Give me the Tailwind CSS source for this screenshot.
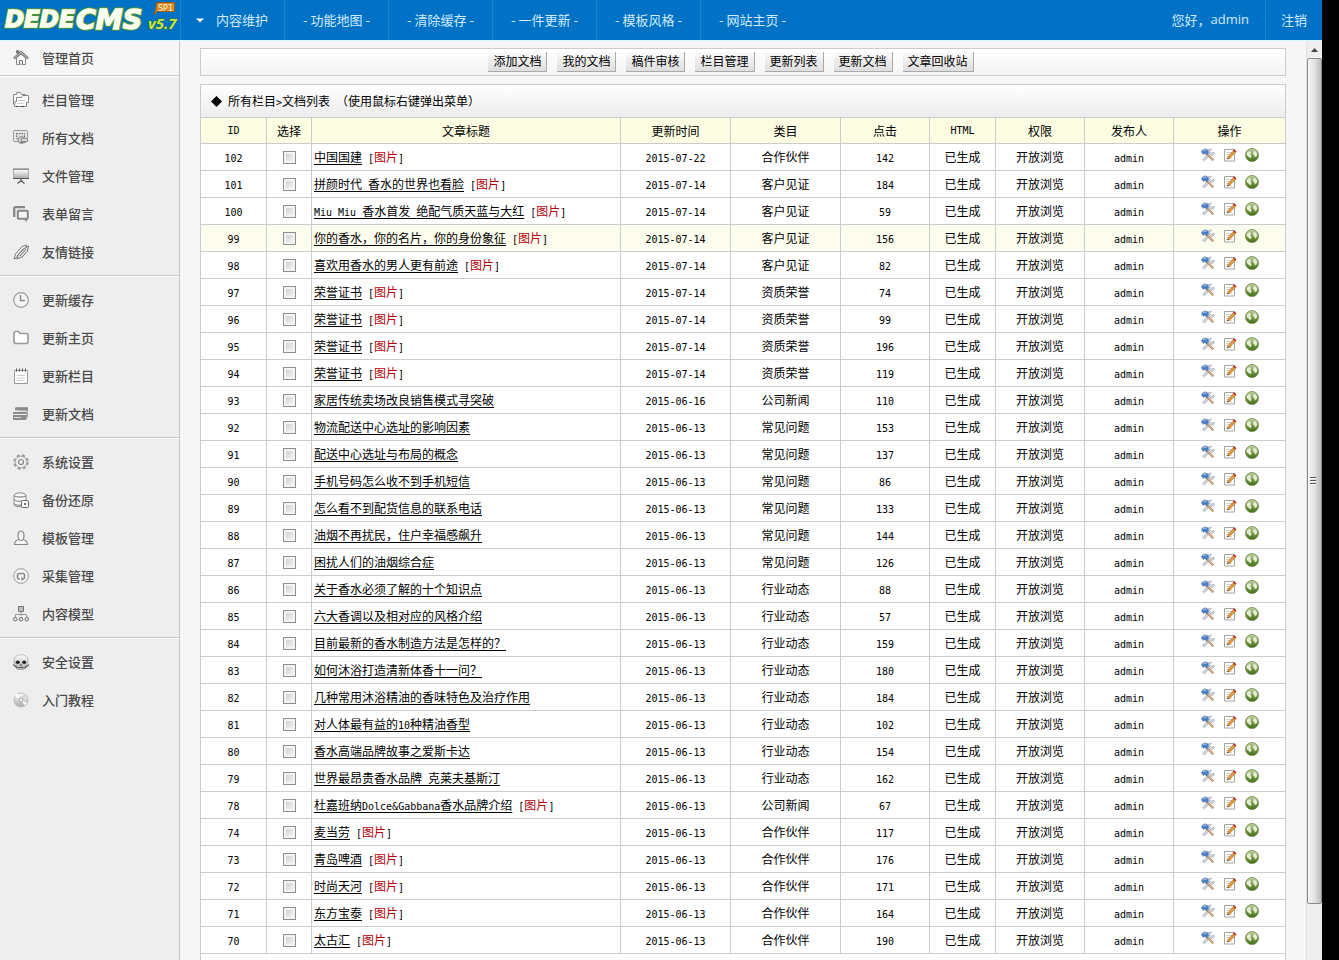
<!DOCTYPE html>
<html lang="zh-CN">
<head>
<meta charset="utf-8">
<title>DedeCMS 内容维护</title>
<script src="https://cdn.jsdelivr.net/npm/@tailwindcss/browser@4"></script>
</head>
<body class="flex h-screen overflow-hidden bg-black font-['Noto_Sans_CJK_SC',sans-serif] text-xs text-black">
<svg class="absolute size-0" aria-hidden="true">
  <defs>
    <linearGradient id="gGlobe" x1="0" y1="0" x2="0" y2="1"><stop offset="0" stop-color="#c3d0a8"/><stop offset=".5" stop-color="#7d9f4c"/><stop offset="1" stop-color="#3f6b16"/></linearGradient>
    <linearGradient id="gGrey" x1="0" y1="0" x2="0" y2="1"><stop offset="0" stop-color="#fff"/><stop offset="1" stop-color="#aaa"/></linearGradient>
    <symbol id="tools" viewBox="0 0 14 14">
      <path d="M10.500 1.200 8.600 3.400l1.600 1.800 2.800-1 .4 1.600-2.300 1.600-2.200-.5-5.600 6-1.700-1.600 5.800-5.600-.2-2.500L8.600 1z" fill="#d3d8e0" stroke="#969eaa" stroke-width=".6"/>
      <path d="m6 6 6.300 6.300" stroke="#b0855a" stroke-width="2.200"/><path d="m6.300 6 6.200 6.100" stroke="#ecd9bd" stroke-width=".8"/>
      <path d="M1 2.500 4 .8l3.600 1.400-1 .8.9 1.500L5.400 7 3.800 5.300 2.600 6.500.6 4.300z" fill="#4a7ec4" stroke="#3a65a3" stroke-width=".5"/><path d="m2 3 2-1.200 1.600.6" fill="none" stroke="#b9d2f2"/>
    </symbol>
    <symbol id="edit" viewBox="0 0 14 14">
      <path d="M1.500 1.500h10v11.500h-10z" fill="#fff" stroke="#a4a49c"/><path d="M3 4.500h6M3 6.500h4M3 8.500h3M3 10.500h6" stroke="#d4d4cc"/>
      <path d="m11 2 2 1.700-6 6.300-2.500 1 .7-2.700z" fill="#e59a3c" stroke="#a8682b" stroke-width=".6"/><path d="m11 1.200 2.400 2-1.200 1.300-2.300-2z" fill="#b8322b"/><path d="m4.300 11.200.4-1.400 1 .8z" fill="#333"/>
    </symbol>
    <symbol id="globe" viewBox="0 0 14 14">
      <circle cx="7" cy="7" r="6.600" fill="url(#gGlobe)" stroke="#7b9155" stroke-width=".8"/>
      <path d="M2 4.500 4.500 3 6 4.500l-.6 1.700L6.500 8 5.400 10.500 4 9 1.800 7z" fill="#e6eed8"/><path d="m8.500 3 2.500.6 1.200 2.600-.8 2.300-1.400.7L9.200 7l-1.200-.8z" fill="#e6eed8"/>
    </symbol>
  </defs>
</svg>

<div class="flex min-w-0 flex-1 flex-col bg-[#f6f6f6]">
  <header class="flex h-[41px] shrink-0 items-stretch border-b border-[#d3fbfd] bg-[#0072c6] text-[13px] text-[#d3eaff]">
    <a href="#" aria-label="DEDECMS" class="w-45 shrink-0">
      <svg width="180" height="40" viewBox="0 0 180 40">
        <g font-family="DejaVu Sans" font-weight="700" font-style="italic" stroke-linejoin="miter">
          <g fill="#4a8f3c" stroke="#4a8f3c" stroke-width="3.500"><text x="5" y="27" font-size="23">DEDE</text><text x="76" y="29" font-size="27">CMS</text></g>
          <g fill="#fbfff0" stroke="#fbfff0" stroke-width="1.400"><text x="5" y="27" font-size="23">DEDE</text><text x="76" y="29" font-size="27">CMS</text></g>
        </g>
        <path d="M156.500 2.500h18v9h-17l-4 3 2-4z" fill="#d98a28" stroke="#8d5a17"/>
        <text x="158" y="10.500" font-family="DejaVu Sans" font-size="8" fill="#fff6d8">SP1</text>
        <text x="148" y="29" font-family="Open Sans" font-style="italic" font-weight="700" font-size="15" fill="#c3e83c" stroke="#2b6b3d" stroke-width="1" paint-order="stroke">v5.7</text>
      </svg>
    </a>
    <nav class="flex flex-1">
      <a href="#" class="flex w-26 items-center gap-3 border-l border-[#1a84d2] pl-[15px]"><svg width="8" height="5" viewBox="0 0 8 5"><path d="M0 .5h8L4 4.500z" fill="#fff"/></svg>内容维护</a>
      <a href="#" class="flex w-26 items-center justify-center border-l border-[#1a84d2]">- 功能地图 -</a>
      <a href="#" class="flex w-26 items-center justify-center border-l border-[#1a84d2]">- 清除缓存 -</a>
      <a href="#" class="flex w-26 items-center justify-center border-l border-[#1a84d2]">- 一件更新 -</a>
      <a href="#" class="flex w-26 items-center justify-center border-l border-[#1a84d2]">- 模板风格 -</a>
      <a href="#" class="flex w-26 items-center justify-center border-l border-[#1a84d2]">- 网站主页 -</a>
    </nav>
    <span class="flex items-center px-4">您好，<span class="font-['Open_Sans',sans-serif]">admin</span></span>
    <a href="#" class="flex items-center border-l border-[#1a84d2] px-[15px]">注销</a>
  </header>

  <div class="flex min-h-0 flex-1">
    <aside id="side" class="w-45 shrink-0 border-r border-[#c6c6c6] bg-[#eee] text-[13px] font-medium text-[#4a4a4a]"></aside>

    <main class="flex min-w-0 flex-1 flex-col gap-2 overflow-hidden px-5 pt-[7px]">
      <div class="flex h-7 shrink-0 items-center justify-center gap-2.5 border border-[#ccc] bg-linear-to-b from-white to-[#f4f4f4] pr-6" id="bar"></div>
      <section class="shrink-0">
        <h1 class="flex h-[33px] items-center gap-1.5 border border-b-0 border-[#ccc] bg-linear-to-b from-white to-[#ececec] px-2.5">
          <svg width="11" height="11" viewBox="0 0 11 11"><path d="m5.500 0 5.500 5.500L5.500 11 0 5.500z"/></svg>
          <span>所有栏目<span class="font-['DejaVu_Sans_Mono',monospace] text-[10px]">&gt;</span>文档列表</span><span>（使用鼠标右键弹出菜单）</span>
        </h1>
        <table class="w-full table-fixed border-collapse text-center">
          <colgroup><col class="w-[66px]"><col class="w-[45px]"><col><col class="w-[110px]"><col class="w-[110px]"><col class="w-[89px]"><col class="w-[66px]"><col class="w-[89px]"><col class="w-[89px]"><col class="w-[112px]"></colgroup>
          <thead>
            <tr class="h-[26px] bg-[#fbfce2] [&>th]:border [&>th]:border-[#ccc] [&>th]:p-0 [&>th]:font-normal">
              <th class="font-['DejaVu_Sans_Mono',monospace] text-[10px]">ID</th><th>选择</th><th>文章标题</th><th>更新时间</th><th>类目</th><th>点击</th><th class="font-['DejaVu_Sans_Mono',monospace] text-[10px]">HTML</th><th>权限</th><th>发布人</th><th>操作</th>
            </tr>
          </thead>
          <tbody id="rows"></tbody>
        </table>
      </section>
    </main>

    <div class="flex w-4 shrink-0 flex-col border-l border-[#e2e2e2] bg-[#eee]" aria-hidden="true">
      <div class="flex h-[17px] items-center justify-center"><svg width="7" height="4" viewBox="0 0 7 4"><path d="M3.500 0 7 4H0z" fill="#444"/></svg></div>
      <div class="mb-14 flex flex-1 flex-col items-start justify-center gap-px rounded-xs border border-[#8c8c8c] bg-linear-to-r from-[#f6f6f6] via-[#e2e2e2] to-[#bcbcbc] pl-0.5">
        <i class="h-0.5 w-1.5 border-b border-white bg-[#555]"></i><i class="h-0.5 w-1.5 border-b border-white bg-[#555]"></i><i class="h-0.5 w-1.5 border-b border-white bg-[#555]"></i>
      </div>
    </div>
  </div>
</div>
<div class="w-[17px] shrink-0"></div>

<script>
const icons = {
  home: '<path d="M3.500 8v6.500h9V8L8 4z" fill="#fff" stroke="#888"/><path d="M6.500 14.500v-4h3v4" fill="#eee" stroke="#777"/><path d="M3 1.500h2v3M1 8.500l7-6.300 7 6.300" fill="none" stroke="#777" stroke-width="2.400"/><path d="m1.300 8.200 6.700-6 6.700 6" fill="none" stroke="#ccc" stroke-width=".9"/>',
  folders: '<path d="M.5 12.500v-10h3v-2h4l1 2h4V5" fill="#fafafa" stroke="#888"/><path d="M3.500 5.500h5l1-2h6v7h-2v4h-12l.5-5h1.500z" fill="#fff" stroke="#888"/><path d="M5 8.500h7M4 11.500h7" stroke="#ccc"/><path d="M3 14.500h2m3 0h3" stroke="#444"/>',
  image: '<rect x=".5" y=".5" width="14" height="11" rx="1" fill="#e6e6e6" stroke="#999"/><path d="M3.500 3.500h8v5h-8z" fill="#ddd" stroke="#666" stroke-dasharray="1.500 1"/><circle cx="8.500" cy="10" r="3.500" fill="#ccc" stroke="#888"/><path d="M8.500 8.500h6v3h-6zM7 12.500h6" fill="#ddd" stroke="#888"/>',
  board: '<path d="M.5 1.500h15v9H.5z" fill="url(#gGrey)" stroke="#aaa"/><path d="M0 1h16" stroke="#777"/><path d="M0 10.500h16M8 10v4M4.500 15.500 8 12.500l3.500 3" fill="none" stroke="#555" stroke-width="1.200"/>',
  chat: '<path d="M1.200 11V2.200c0-.6.4-1 1-1H12" fill="none" stroke="#888" stroke-width="2.300"/><rect x="4.800" y="4.800" width="10" height="8" rx=".8" fill="#f5f5f5" stroke="#888" stroke-width="2"/><path d="M10 13h4v3z" fill="#888"/>',
  link: '<g fill="none" stroke="#777"><path d="m1 15 1.500-5L9 2.500l4.500-1.500L12 5.500 5.500 13z" fill="#f6f6f6"/><path d="m4 15 1.500-4.500 5-5.500 5-3-1 5-5.500 6z" fill="#e4e4e4"/><path d="m3.500 12.500 7-8M7 12l6-7"/></g>',
  clock: '<circle cx="8" cy="8" r="7.300" fill="#f5f5f5" stroke="#999" stroke-width="1.200"/><path d="M7.500 3v5.500H12" fill="none" stroke="#888" stroke-width="1.400"/>',
  folder: '<path d="M1 12V2.500l1-1h3.500l1.500 2h7l1 1V12l-1 1.500H2z" fill="#fff" stroke="#999" stroke-width="1.600" stroke-linejoin="round"/>',
  note: '<path d="M1.500 2.500h13v13h-13z" fill="#fff" stroke="#999"/><path d="M3.500.5v3m3-3v3m3-3v3m3-3v3" stroke="#555"/><path d="M4 7.500h8M4 10h8m-8 2.500h6" stroke="#ccc"/>',
  stack: '<path d="M3 1h12v10l-2 3z" fill="#aaa"/><path d="M2 1.500h13v3H2zM0 6h13v8H0z" fill="#8b8b8b"/><path d="M0 8.500h13M0 5.200h13.500" stroke="#eee"/><path d="M1 11.500h7" stroke="#ddd"/>',
  gear: '<circle cx="8" cy="8" r="6.500" fill="none" stroke="#999" stroke-width="2.400" stroke-dasharray="3.100 2.005"/><circle cx="8" cy="8" r="5.600" fill="#f0f0f0" stroke="#aaa" stroke-width=".8"/><circle cx="8" cy="8" r="2.500" fill="#eee" stroke="#888" stroke-width="1.200"/>',
  db: '<path d="M1 3.500c0-3.500 12-3.500 12 0v9c0 3-12 3-12 0z" fill="#f8f8f8" stroke="#888"/><path d="M1 3.500c1 2 11 2 12 0M1 7.500c1 2 6 2 8 1.500M1 11.500c1 2 5 2 7 1.500" fill="none" stroke="#777"/><rect x="8.500" y="8.500" width="7" height="7" rx="1" fill="#fff" stroke="#666"/><path d="M11.500 11.500h1v1h-1z" stroke="#555"/>',
  user: '<path d="M1.500 14.500c.2-3.500 1.500-4.500 4.500-5C4 6 5 1 8 1s4 5 2 8.500c3 .5 4.300 1.500 4.500 5z" fill="#f4f4f4" stroke="#888" stroke-width="1.200"/><path d="M6 9.500c1 1.500 3 1.500 4 0" fill="none" stroke="#888"/>',
  cycle: '<circle cx="8" cy="8" r="7.300" fill="#f4f4f4" stroke="#999"/><path d="M7 11H5.500l-1-1V6.500l1-1h5l1 1V10l-1 1" fill="none" stroke="#888" stroke-width="1.500"/><path d="M8.500 9v4l2.500-2z" fill="#777"/>',
  tree: '<path d="M5.500.5h5v5h-5z" fill="#bbb" stroke="#777"/><path d="M8 6v4M2.500 11V8.500h11V11" fill="none" stroke="#999"/><g fill="#ddd" stroke="#777"><circle cx="2.200" cy="13.200" r="1.800"/><circle cx="8" cy="13.200" r="1.800"/><circle cx="13.800" cy="13.200" r="1.800"/></g>',
  skull: '<path d="M1 6c0-7 14-7 14 0v3l-2 1.500V14l-2 1.500H5L3 14v-3.500L1 9z" fill="url(#gGrey)" stroke="#999" stroke-width=".6"/><ellipse cx="4.800" cy="8.300" rx="2" ry="1.800" fill="#222"/><ellipse cx="11.200" cy="8.300" rx="2" ry="1.800" fill="#222"/><path d="m8 9.500-1 2h2z" fill="#333"/><path d="M0 10.500 4.500 14M16 10.500 11.500 14M5.500 13.500h5" stroke="#555" stroke-width="1.200"/>',
  disc: '<circle cx="8" cy="8" r="7" fill="url(#gGrey)" stroke="#bbb"/><path d="M8 8 2 4l2-2.500zM8 8l6 3-2 2.500z" fill="#fff"/><path d="m8 8 3-6.500 3 3z" fill="#d5d5d5"/><circle cx="8" cy="8" r="2" fill="#eee" stroke="#aaa"/>'
};
const menu = [
  [['folders','栏目管理'],['image','所有文档'],['board','文件管理'],['chat','表单留言'],['link','友情链接']],
  [['clock','更新缓存'],['folder','更新主页'],['note','更新栏目'],['stack','更新文档']],
  [['gear','系统设置'],['db','备份还原'],['user','模板管理'],['cycle','采集管理'],['tree','内容模型']],
  [['skull','安全设置'],['disc','入门教程']]
];
const svg = n => `<svg width="16" height="16" viewBox="0 0 16 16" class="shrink-0">${icons[n]}</svg>`;
document.getElementById('side').innerHTML =
  `<a href="#" class="flex h-[35px] items-center gap-[13px] border-b border-[#c6c6c6] bg-[#f6f6f6] pl-[13px]">${svg('home')}管理首页</a>` +
  menu.map(g => `<ul class="border-t border-b border-t-white border-b-[#c6c6c6] py-1 last:border-b-0">${g.map(([i, t]) =>
    `<li><a href="#" class="flex h-[38px] items-center gap-[13px] pl-[13px]">${svg(i)}${t}</a></li>`).join('')}</ul>`).join('');

document.getElementById('bar').innerHTML = ['添加文档','我的文档','稿件审核','栏目管理','更新列表','更新文档','文章回收站'].map(t =>
  `<button type="button" class="h-5 border-r border-b border-[#aaa] bg-linear-to-b from-[#fbfbfb] to-[#dedede] px-[5px] pb-0.5 leading-4">${t}</button>`).join('');

// id | title | has picture | date | category | clicks
const data = `102|中国国建|1|2015-07-22|合作伙伴|142
101|拼颜时代 香水的世界也看脸|1|2015-07-14|客户见证|184
100|Miu Miu 香水首发 绝配气质天蓝与大红|1|2015-07-14|客户见证|59
99|你的香水，你的名片，你的身份象征|1|2015-07-14|客户见证|156
98|喜欢用香水的男人更有前途|1|2015-07-14|客户见证|82
97|荣誉证书|1|2015-07-14|资质荣誉|74
96|荣誉证书|1|2015-07-14|资质荣誉|99
95|荣誉证书|1|2015-07-14|资质荣誉|196
94|荣誉证书|1|2015-07-14|资质荣誉|119
93|家居传统卖场改良销售模式寻突破||2015-06-16|公司新闻|110
92|物流配送中心选址的影响因素||2015-06-13|常见问题|153
91|配送中心选址与布局的概念||2015-06-13|常见问题|137
90|手机号码怎么收不到手机短信||2015-06-13|常见问题|86
89|怎么看不到配货信息的联系电话||2015-06-13|常见问题|133
88|油烟不再扰民，住户幸福感飙升||2015-06-13|常见问题|144
87|困扰人们的油烟综合症||2015-06-13|常见问题|126
86|关于香水必须了解的十个知识点||2015-06-13|行业动态|88
85|六大香调以及相对应的风格介绍||2015-06-13|行业动态|57
84|目前最新的香水制造方法是怎样的？||2015-06-13|行业动态|159
83|如何沐浴打造清新体香十一问？||2015-06-13|行业动态|180
82|几种常用沐浴精油的香味特色及治疗作用||2015-06-13|行业动态|184
81|对人体最有益的10种精油香型||2015-06-13|行业动态|102
80|香水高端品牌故事之爱斯卡达||2015-06-13|行业动态|154
79|世界最昂贵香水品牌 克莱夫基斯汀||2015-06-13|行业动态|162
78|杜嘉班纳Dolce&Gabbana香水品牌介绍|1|2015-06-13|公司新闻|67
74|麦当劳|1|2015-06-13|合作伙伴|117
73|青岛啤酒|1|2015-06-13|合作伙伴|176
72|时尚天河|1|2015-06-13|合作伙伴|171
71|东方宝泰|1|2015-06-13|合作伙伴|164
70|太古汇|1|2015-06-13|合作伙伴|190`.split('\n').map(r => r.split('|'));
const latin = s => `<span class="font-['DejaVu_Sans_Mono',monospace] text-[10px]">${s.replace('&', '&amp;')}</span>`;
const action = (id, label) => `<a href="#" aria-label="${label}"><svg width="14" height="14"><use href="#${id}"/></svg></a>`;
document.getElementById('rows').innerHTML = data.map(([id, title, pic, date, cat, hits]) =>
  `<tr class="h-[27px] ${id === '99' ? 'bg-[#fcfdee]' : 'bg-white'} [&>td]:border [&>td]:border-[#ccc] [&>td]:p-0">
    <td>${latin(id)}</td>
    <td><input type="checkbox" aria-label="选择 ${id}" class="mx-auto block size-[13px] appearance-none border border-[#8e8f8f] bg-linear-to-br from-[#ccc] to-[#f8f8f8] shadow-[inset_0_0_0_2px_#f4f4f4]"></td>
    <td class="text-left whitespace-nowrap"><div class="pl-0.5"><a href="#" class="underline underline-offset-2">${title.replace(/[\x20-\x7e]+/g, latin)}</a>${pic ? `${latin(' [')}<span class="text-[#b3000c]">图片</span>${latin(']')}` : ''}</div></td>
    <td>${latin(date)}</td><td>${cat}</td><td>${latin(hits)}</td><td>已生成</td><td>开放浏览</td><td>${latin('admin')}</td>
    <td><div class="flex items-center justify-center gap-2 pb-1">${action('tools', '属性')}${action('edit', '编辑')}${action('globe', '预览')}</div></td>
  </tr>`).join('') + '<tr class="h-[27px] bg-white"><td colspan="10" class="border border-[#ccc]"></td></tr>';
</script>
</body>
</html>
